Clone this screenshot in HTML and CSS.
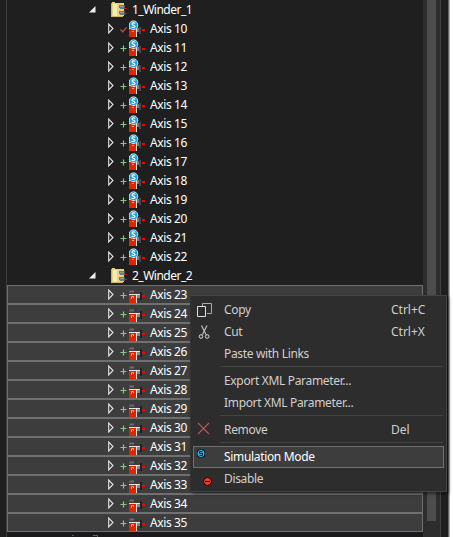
FILE: index.html
```
<!DOCTYPE html>
<html lang="en">
<head>
<meta charset="utf-8">
<title>Axes</title>
<link rel="stylesheet" href="styles.css">
</head>
<body>
<svg class="defs" aria-hidden="true">
  <symbol id="closed" viewBox="0 0 7 11"><path d="M.7 1v9L5 5.5z" fill="none" stroke="#e4e4e4" stroke-width="1.1"/></symbol>
  <symbol id="open" viewBox="0 0 7 7"><path d="M6.5 0v6.5H0z" fill="#eee"/></symbol>
  <symbol id="plus" viewBox="0 0 7 7"><path d="M.5 3.500h6M3.500 .5v6" stroke="#86c786" stroke-width="1.200"/></symbol>
  <symbol id="check" viewBox="0 0 7 7"><path d="M.4 3.5 2.6 5.8 6.7 1.4" fill="none" stroke="#c9474f" stroke-width="1.3"/></symbol>
  <symbol id="drive" viewBox="0 0 18 19">
    <path d="M0 6l1-1h4v3H0z" fill="#555"/><path d="M1 6.500h4" stroke="#6d6d6d"/>
    <path d="M8 9h3v4H8z" fill="#888"/><path d="M11 7h2v8h-2z" fill="#222"/>
    <path d="M0 10h8v8H0z" fill="#dc2600"/><path d="M0 9h11v1H0zM7 10h1v8H7z" fill="#e4e4e4"/>
    <path d="M2.500 14v-2.500h2V13" fill="none" stroke="#f0a090"/>
    <path d="M13 11h3" stroke="#f00" stroke-width="2"/>
  </symbol>
  <symbol id="simdrive" viewBox="0 0 18 19">
    <path d="M8 9h3v4H8z" fill="#777"/><path d="M10 8h2v7h-2z" fill="#484848"/>
    <path d="M0 9h8v9H0z" fill="#dc2600"/><path d="M7 10h1v8H7z" fill="#e4e4e4"/><path d="M0 9h1v1H0z" fill="#eee"/>
    <path d="M3 12.500h2" stroke="#f0a090"/>
    <path d="M13 11h3" stroke="#f00" stroke-width="2"/>
    <circle cx="4.500" cy="6.300" r="4.700" fill="#fff"/><circle cx="4.500" cy="6.300" r="4" fill="#1d9fd9"/>
    <path d="M6.300 4.400C5 3.500 3 3.800 3 5c0 1.500 3 .9 3 2.500 0 1.300-2.200 1.400-3.400.5" fill="none" stroke="#fff" stroke-width="1.100"/>
  </symbol>
  <symbol id="folder" viewBox="0 0 18 19">
    <path d="M1 2h3v1h9v13H1z" fill="#e6d37d"/><path d="M2 4h4v12H2z" fill="#f5ebb4"/><path d="M0 3h1v14H0zM1 16h11v1H1z" fill="#d0b75c"/>
    <path d="M8 5h5v4H9V8H8zM8 11h5v4H9v-1H8z" fill="#777"/><path d="M9 6.500h4M9 12.500h4" stroke="#999"/><path d="M13 5h1v4h-1zM13 11h1v4h-1z" fill="#555"/>
    <path d="M14 8.500h2M14 13.500h2" stroke="#f00"/>
  </symbol>
</svg>
<div class="window">
  <div class="gutter"></div>
  <div class="tree" id="tree"></div>
  <div class="scroll"><div class="thumb"></div></div>
  <div class="edge"></div>
</div>
<div class="menu">
  <div class="item"><svg class="mi" viewBox="0 0 24 22"><path d="M9.500 7V4.500h9v10H14" fill="none" stroke="#aaa"/><path d="M4.500 7.500h8v10h-8z" fill="none" stroke="#e0e0e0"/></svg><span class="label">Copy</span><span class="key">Ctrl+C</span></div>
  <div class="item"><svg class="mi" viewBox="0 0 24 22"><path d="M8.500 4.500l4.500 9M14 4.500l-4.500 9" stroke="#b8b8b8" stroke-width="1.300"/><circle cx="8" cy="15.500" r="1.800" fill="none" stroke="#ddd"/><circle cx="14.200" cy="15.500" r="1.800" fill="none" stroke="#ddd"/></svg><span class="label">Cut</span><span class="key">Ctrl+X</span></div>
  <div class="item"><span class="mi"></span><span class="label">Paste with Links</span></div>
  <div class="sep"></div>
  <div class="item"><span class="mi"></span><span class="label">Export XML Parameter...</span></div>
  <div class="item"><span class="mi"></span><span class="label">Import XML Parameter...</span></div>
  <div class="sep"></div>
  <div class="item"><svg class="mi" viewBox="0 0 24 22"><path d="M5 4l11 11M16 4L5 15" stroke="#c74f5a" stroke-width="1.100"/></svg><span class="label">Remove</span><span class="key">Del</span></div>
  <div class="sep"></div>
  <div class="item active"><svg class="mi" viewBox="0 0 24 22"><rect x="4" y="3.500" width="8" height="8" rx="2" fill="#0a1720"/><circle cx="8" cy="7.500" r="3.400" fill="#37b4e8"/><path d="M9.500 5.600h-3v1.800h3v1.900h-3" fill="none" stroke="#07141c"/></svg><span class="label">Simulation Mode</span></div>
  <div class="item"><svg class="mi" viewBox="0 0 24 22"><circle cx="14.500" cy="13.500" r="4" fill="#ff3b30" stroke="#180000"/><path d="M12 13.500h5" stroke="#200000" stroke-width="1.200"/></svg><span class="label">Disable</span></div>
</div>
<script src="tree.js"></script>
</body>
</html>
```
FILE: styles.css
```
* { box-sizing: border-box; }
body { margin: 0; background: #fff; overflow: hidden; font-family: "Noto Sans", "Open Sans", sans-serif; font-size: 12px; }
svg { display: block; flex: none; }
.defs { position: absolute; width: 0; height: 0; }
.window { display: flex; width: 450px; height: 537px; background: #1f1f1f; overflow: hidden; }
.gutter { width: 7px; border-right: 1px solid #3d3d3d; }
.tree { width: 416px; }
.row { display: flex; align-items: flex-start; height: 19px; color: #fff; }
.row.selected { background: #3d3d3d; box-shadow: inset 0 0 0 1px #707070; }
.row.group { padding-left: 82px; }
.row.axis { padding-left: 101px; }
.closed { width: 7px; height: 11px; margin-top: 4px; }
.open { width: 7px; height: 7px; margin-top: 6px; }
.state { width: 7px; height: 7px; margin: 7px -1px 0 5px; }
.icon { width: 18px; height: 19px; margin-right: 3px; }
.axis .icon { margin-left: 3px; }
.group .icon { margin-left: 15px; }
.name { line-height: 19px; white-space: pre; letter-spacing: -.4px; }
.group .name { letter-spacing: -.5px; }
.below { display: flex; height: 5px; background: #1a1a1c; padding: 3px 0 0 65px; gap: 19px; }
.below i { width: 2px; height: 1px; background: #555; }
.below i + i { width: 5px; height: 2px; background: none; border-top: 1px solid #666; border-right: 1px solid #666; }
.scroll { width: 18px; padding-left: 4px; background: #2d2d2d; border-right: 1px solid #424242; }
.thumb { width: 9px; height: 521px; background: #4d4d4d; }
.edge { width: 9px; border-right: 1px solid #aaa; box-shadow: inset -1px 0 #666; }
.menu { position: absolute; left: 190px; top: 295px; width: 257px; height: 197px; padding: 3px 2px 2px; background: #2d2d2d; border: 1px solid #434343; border-left-color: #333; box-shadow: 2px 2px 3px rgba(0,0,0,.45); color: #d0d0d0; }
.item { display: flex; height: 22px; line-height: 22px; }
.item.active { background: #3d3d3d; box-shadow: inset 0 0 0 1px #707070; color: #fff; }
.mi { width: 24px; height: 22px; flex: none; }
.label { width: 174px; padding-left: 7px; white-space: nowrap; letter-spacing: -.33px; }
.sep { height: 5px; margin: 0 1px 0 27px; background: linear-gradient(#444,#444) 0 1px / 100% 1px no-repeat; }
```
FILE: tree.js
```
const tree = document.getElementById("tree");
const use = (cls, id) => `<svg class="${cls}"><use href="#${id}"/></svg>`;
const group = name => `<div class="row group">${use("open", "open")}${use("icon", "folder")}<span class="name">${name}</span></div>`;
const axis = (n, selected) => `<div class="row axis${selected ? " selected" : ""}">${use("closed", "closed")}${use("state", n === 10 ? "check" : "plus")}${use("icon", selected ? "drive" : "simdrive")}<span class="name">Axis ${n}</span></div>`;
let html = group("1_Winder_1");
for (let n = 10; n <= 22; n++) html += axis(n, false);
html += group("2_Winder_2");
for (let n = 23; n <= 35; n++) html += axis(n, true);
tree.innerHTML = html + '<div class="below"><i></i><i></i></div>';
```
